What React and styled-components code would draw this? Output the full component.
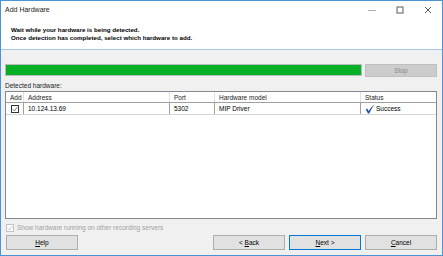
import React from "react";
import styled, {createGlobalStyle} from "styled-components";

const Global = createGlobalStyle`
   html, body {
      margin: 0;
      padding: 0;
      background: #ffffff;
   }
   * {
      box-sizing: border-box;
   }
`;

const Window = styled.div`
   width: 443px;
   height: 256px;
   display: flex;
   flex-direction: column;
   border: 1px solid #4c93d6;
   font-family: "Liberation Sans", Arial, sans-serif;
   font-size: 6.5px;
   color: #000;
   overflow: hidden;
`;

const TitleBar = styled.div`
   height: 17px;
   display: flex;
   align-items: center;
   justify-content: space-between;
   background: #fff;
   padding-left: 4px;
`;

const Title = styled.span`
   font-size: 7px;
   color: #1a1a1a;
`;

const Controls = styled.div`
   display: flex;
   height: 100%;
`;

const Ctl = styled.div`
   width: 28px;
   display: flex;
   align-items: center;
   justify-content: center;
`;

const Header = styled.div`
   height: 32px;
   background: #fff;
   padding: 8px 0 0 10px;
   border-bottom: 1px solid #a7c6e6;
`;

const HeadLine = styled.div`
   font-weight: bold;
   font-size: 6.2px;
   line-height: 7.5px;
   white-space: nowrap;
`;

const Body = styled.div`
   flex: 1;
   background: #f0f0f0;
   display: flex;
   flex-direction: column;
   padding: 14px 5px 0 4px;
`;

const ProgressRow = styled.div`
   display: flex;
   gap: 3px;
   align-items: flex-start;
`;

const Progress = styled.div`
   flex: 1;
   height: 12px;
   border: 1px solid #bcbcbc;
   background: #e6e6e6;
`;

const Fill = styled.div`
   height: 100%;
   background: #06b025;
`;

const Button = styled.div`
   width: 72px;
   height: ${(p) => p.$h || 15}px;
   display: flex;
   align-items: center;
   justify-content: center;
   font-size: 6.5px;
   background: ${(p) => (p.$disabled ? "#cccccc" : "#e1e1e1")};
   border: 1px solid
      ${(p) => (p.$focus ? "#0078d7" : p.$disabled ? "#bfbfbf" : "#adadad")};
   color: ${(p) => (p.$disabled ? "#8a8a8a" : "#000")};
   u {
      text-decoration: underline;
   }
`;

const Label = styled.div`
   margin-top: 3px;
   height: 11px;
   line-height: 11px;
   color: #222;
`;

const Grid = styled.div`
   height: 128px;
   border: 1px solid #828790;
   background: #fff;
`;

const Row = styled.div`
   display: grid;
   grid-template-columns: 18px 146px 45px 146px 1fr;
   height: ${(p) => (p.$head ? 11 : 12)}px;
   border-bottom: 1px solid ${(p) => (p.$head ? "#a0a0a0" : "#d5d5d5")};
`;

const Cell = styled.div`
   display: flex;
   align-items: center;
   gap: 1px;
   padding-left: ${(p) => (p.$center ? 0 : 4)}px;
   justify-content: ${(p) => (p.$center ? "center" : "flex-start")};
   border-right: 1px solid ${(p) => (p.$head ? "#e0e0e0" : "#a0a0a0")};
   white-space: nowrap;
   color: ${(p) => (p.$head ? "#222" : "#000")};
   &:last-child {
      border-right: none;
   }
`;

const Box = styled.div`
   width: 8px;
   height: 8px;
   border: 1px solid ${(p) => (p.$disabled ? "#c4c4c4" : "#333")};
   background: #fff;
   display: flex;
   align-items: center;
   justify-content: center;
`;

const ShowRow = styled.div`
   display: flex;
   align-items: center;
   gap: 3px;
   height: 17px;
   padding-left: 1px;
   color: #a0a0a0;
`;

const Buttons = styled.div`
   display: flex;
   gap: 4px;
   margin-top: -1px;
   padding-left: 1px;
`;

const Spacer = styled.div`
   flex: 1;
`;

const Tick = ({color = "#333", size = 6}) => (
   <svg width={size} height={size} viewBox="0 0 8 8">
      <path d="M1 4.2 L3.2 6.4 L7 1.6" fill="none" stroke={color} strokeWidth="0.9" />
   </svg>
);

const columns = ["Add", "Address", "Port", "Hardware model", "Status"];

const App = () => {
   return (
      <>
         <Global />
         <Window>
            <TitleBar>
               <Title>Add Hardware</Title>
               <Controls>
                  <Ctl>
                     <svg width="8" height="8" viewBox="0 0 8 8">
                        <path d="M0 4.5 H8" stroke="#9a9a9a" strokeWidth="0.8" />
                     </svg>
                  </Ctl>
                  <Ctl>
                     <svg width="8" height="8" viewBox="0 0 8 8">
                        <rect x="1" y="1" width="6" height="6" fill="none" stroke="#333" strokeWidth="0.8" />
                     </svg>
                  </Ctl>
                  <Ctl>
                     <svg width="8" height="8" viewBox="0 0 8 8">
                        <path d="M1 1 L7 7 M7 1 L1 7" stroke="#333" strokeWidth="0.8" />
                     </svg>
                  </Ctl>
               </Controls>
            </TitleBar>
            <Header>
               <HeadLine>Wait while your hardware is being detected.</HeadLine>
               <HeadLine>Once detection has completed, select which hardware to add.</HeadLine>
            </Header>
            <Body>
               <ProgressRow>
                  <Progress>
                     <Fill style={{width: "100%"}} />
                  </Progress>
                  <Button $disabled $h={13}>Stop</Button>
               </ProgressRow>
               <Label>Detected hardware:</Label>
               <Grid>
                  <Row $head>
                     {columns.map((c) => (
                        <Cell key={c} $head>{c}</Cell>
                     ))}
                  </Row>
                  <Row>
                     <Cell $center>
                        <Box>
                           <Tick />
                        </Box>
                     </Cell>
                     <Cell>10.124.13.69</Cell>
                     <Cell>5302</Cell>
                     <Cell>MIP Driver</Cell>
                     <Cell>
                        <svg width="10" height="10" viewBox="0 0 10 10">
                           <path
                              d="M0.8 5.6 L2.2 4.6 L3.6 7.0 Q5.8 2.8 9.6 0.4 Q6.6 3.6 4.2 9.6 L3.0 9.6 Z"
                              fill="#1f4fa8"
                           />
                        </svg>
                        Success
                     </Cell>
                  </Row>
               </Grid>
               <ShowRow>
                  <Box $disabled>
                     <Tick color="#b0b0b0" />
                  </Box>
                  Show hardware running on other recording servers
               </ShowRow>
               <Buttons>
                  <Button><span><u>H</u>elp</span></Button>
                  <Spacer />
                  <Button><span>&lt; <u>B</u>ack</span></Button>
                  <Button $focus><span><u>N</u>ext &gt;</span></Button>
                  <Button><span><u>C</u>ancel</span></Button>
               </Buttons>
            </Body>
         </Window>
      </>
   );
};

export default App;
